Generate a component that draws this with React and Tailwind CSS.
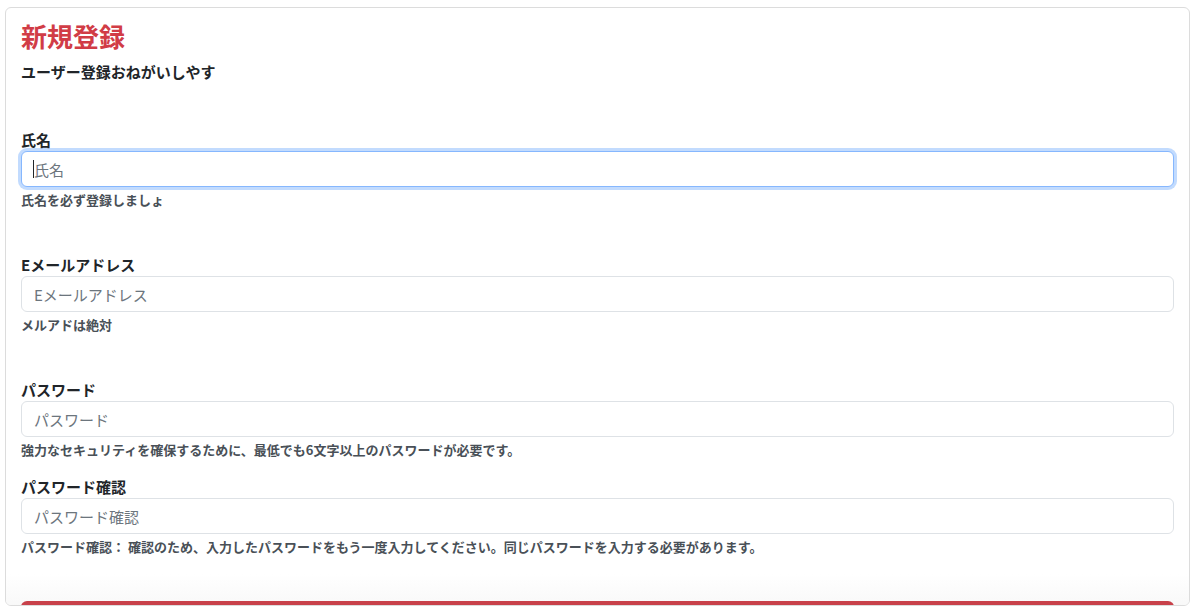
import React from "react";

const font = {
  fontFamily: '"Noto Sans CJK JP", "Noto Sans", "Liberation Sans", sans-serif',
};

const fields = [
  {
    label: "氏名",
    type: "text",
    help: "氏名を必ず登録しましょ",
    focused: true,
    gap: "mb-[45px]",
  },
  {
    label: "Eメールアドレス",
    type: "email",
    help: "メルアドは絶対",
    gap: "mb-[45px]",
  },
  {
    label: "パスワード",
    type: "password",
    help: "強力なセキュリティを確保するために、最低でも6文字以上のパスワードが必要です。",
    gap: "mb-[17px]",
  },
  {
    label: "パスワード確認",
    type: "password",
    help: "パスワード確認： 確認のため、入力したパスワードをもう一度入力してください。同じパスワードを入力する必要があります。",
    gap: "",
  },
];

const Field = ({ label, type, help, focused, gap }) => (
  <div className={gap}>
    <label className="block text-[15px] leading-[22px] font-bold text-[#212529]">
      {label}
    </label>
    <div className="relative">
      <input
        type={type}
        placeholder={label}
        className={`block h-[36px] w-full rounded-md border bg-white px-3 text-[15px] text-[#212529] outline-none placeholder:text-[#6c757d] ${
          focused
            ? "border-[#86b7fe] shadow-[0_0_0_3px_rgba(13,110,253,0.25)]"
            : "border-[#dee2e6]"
        }`}
        style={font}
      />
      {focused && (
        <span className="absolute left-[12px] top-[9px] h-[18px] w-px bg-[#212529]" />
      )}
    </div>
    <p className="mt-[3px] text-[13px] leading-[19px] font-semibold text-[#495057]">
      {help}
    </p>
  </div>
);

const App = () => {
  return (
    <div className="min-h-[606px] bg-white pl-[5px] pr-[10px] pt-[7px]" style={font}>
      <div className="h-[599px] overflow-hidden rounded-md border border-[#dcdcdc] bg-white">
        <div className="px-[15px] pt-3">
          <h1 className="text-[26px] leading-[31px] font-bold text-[#d13c46]">新規登録</h1>
          <p className="mt-[10px] text-[15px] leading-[22px] font-bold text-[#212529]">
            ユーザー登録おねがいしやす
          </p>

          <form className="mt-[46px]">
            {fields.map((f) => (
              <Field key={f.label} {...f} />
            ))}
          </form>
        </div>

        <div className="mt-[18px] bg-linear-to-b from-white to-[#f1f1f1] px-[15px] pt-[27px]">
          <button
            type="button"
            aria-label="登録"
            className="block h-[40px] w-full rounded-md bg-[#c8414a]"
          />
        </div>
      </div>
    </div>
  );
};

export default App;
